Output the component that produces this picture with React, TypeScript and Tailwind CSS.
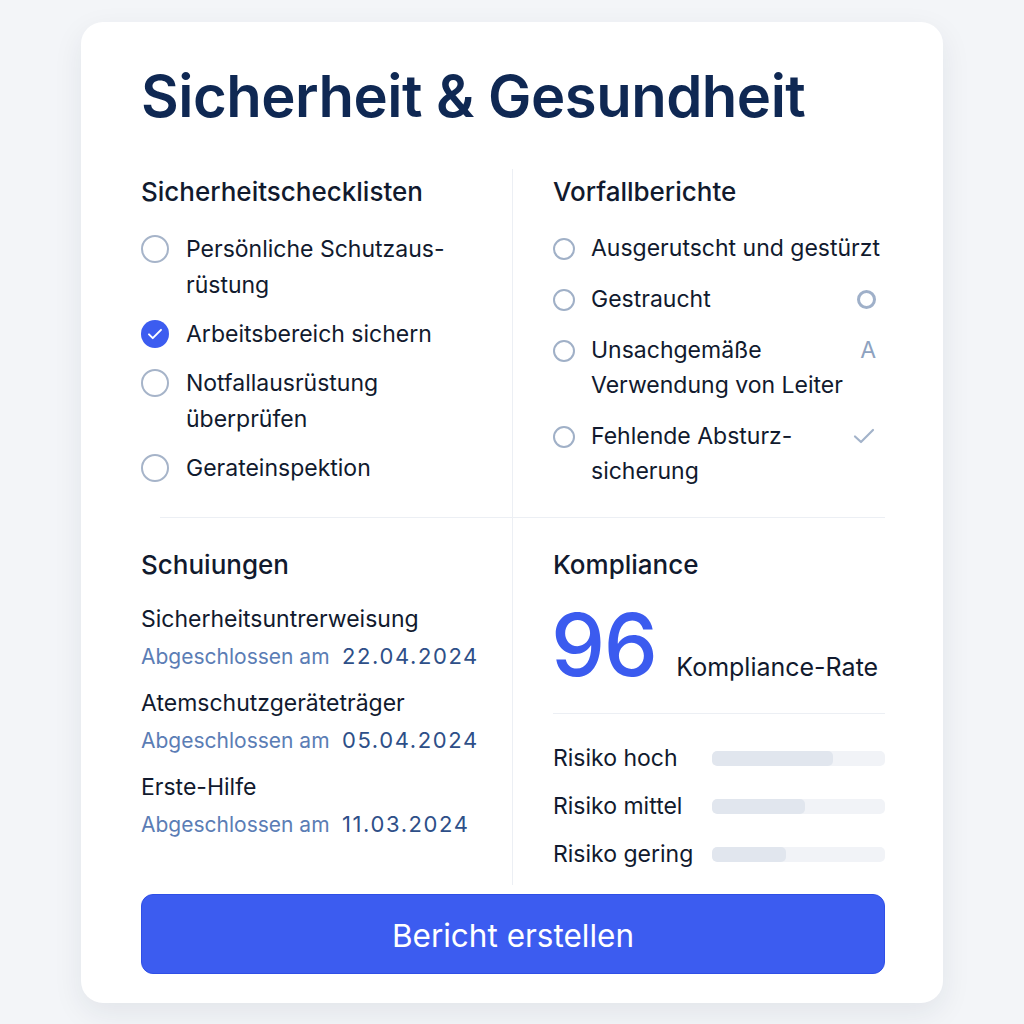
import React from 'react'

const CHECKS = [
  { label: 'Persönliche Schutzaus-\nrüstung', done: false },
  { label: 'Arbeitsbereich sichern', done: true },
  { label: 'Notfallausrüstung\nüberprüfen', done: false },
  { label: 'Gerateinspektion', done: false },
]

const INCIDENTS = [
  { label: 'Ausgerutscht und gestürzt', mark: null },
  { label: 'Gestraucht', mark: 'circle' },
  { label: 'Unsachgemäße\nVerwendung von Leiter', mark: 'letter' },
  { label: 'Fehlende Absturz-\nsicherung', mark: 'check' },
]

const TRAININGS = [
  { name: 'Sicherheitsuntrerweisung', date: '22.04.2024' },
  { name: 'Atemschutzgeräteträger', date: '05.04.2024' },
  { name: 'Erste-Hilfe', date: '11.03.2024' },
]

const RISKS = [
  { label: 'Risiko hoch', value: 70 },
  { label: 'Risiko mittel', value: 53.5 },
  { label: 'Risiko gering', value: 43 },
]

function Mark({ kind }: { kind: string | null }) {
  if (kind === 'circle')
    return <span className="mt-[8px] block h-[19px] w-[19px] shrink-0 rounded-full border-[3px] border-[#9fb0c9]" />
  if (kind === 'letter')
    return <span className="text-[23px] leading-[35px] text-[#8ea2c0]">A</span>
  if (kind === 'check')
    return (
      <svg width="24" height="24" viewBox="0 0 24 24" className="mt-[5px] shrink-0" fill="none" stroke="#a3b3ca" strokeWidth="2.2" strokeLinecap="round" strokeLinejoin="round">
        <path d="M3 12.5l6 5.5L21 6" />
      </svg>
    )
  return null
}

export default function App() {
  return (
    <div className="min-h-screen bg-[#f3f5f8] pt-[22px] font-['Inter',sans-serif] text-[#111a2e]">
      <div className="ml-[81px] w-[862px] rounded-[22px] bg-white pb-[29px] pl-[60px] pr-[58px] pt-[41px] shadow-[0_10px_30px_rgba(30,41,70,0.08)]">
        <h1 className="text-[58px] font-semibold leading-[67px] tracking-[-0.5px] text-[#0f2853]">Sicherheit &amp; Gesundheit</h1>

        <div className="mt-[39px] grid grid-cols-[371px_minmax(0,1fr)]">
          <div className="pb-[28px] pt-[7px]">
            <h2 className="text-[26px] font-medium leading-[32px]">Sicherheitschecklisten</h2>
            <div className="mt-[23px] flex flex-col gap-[13px]">
              {CHECKS.map(c => (
                <div key={c.label} className="flex items-start gap-[17px]">
                  {c.done ? (
                    <span className="mt-[4px] flex h-[28px] w-[28px] shrink-0 items-center justify-center rounded-full bg-[#3c5cf0]">
                      <svg width="18" height="18" viewBox="0 0 24 24" fill="none" stroke="white" strokeWidth="2.6" strokeLinecap="round" strokeLinejoin="round">
                        <path d="M4 12.5l5 5L20 6.5" />
                      </svg>
                    </span>
                  ) : (
                    <span className="mt-[4px] block h-[28px] w-[28px] shrink-0 rounded-full border-2 border-[#a6b4c9]" />
                  )}
                  <span className="whitespace-pre text-[23px] leading-[36px]">{c.label}</span>
                </div>
              ))}
            </div>
          </div>

          <div className="border-l border-[#eceff4] pb-[28px] pl-[40px] pt-[7px]">
            <h2 className="text-[26px] font-medium leading-[32px]">Vorfallberichte</h2>
            <div className="mt-[23px] flex flex-col gap-[16px]">
              {INCIDENTS.map(i => (
                <div key={i.label} className="flex items-start gap-[16px] pr-[9px]">
                  <span className="mt-[6.5px] block h-[22px] w-[22px] shrink-0 rounded-full border-2 border-[#a0b0c7]" />
                  <span className="min-w-0 flex-1 whitespace-pre text-[23px] leading-[35px]">{i.label}</span>
                  <Mark kind={i.mark} />
                </div>
              ))}
            </div>
          </div>
        </div>

        <div className="flex">
          <div className="ml-[19px] h-px flex-1 bg-[#eceff4]" />
        </div>

        <div className="grid grid-cols-[371px_minmax(0,1fr)]">
          <div className="pt-[31px]">
            <h2 className="text-[26px] font-medium leading-[32px]">Schuiungen</h2>
            <div className="mt-[20px] flex flex-col gap-[10px]">
              {TRAININGS.map(t => (
                <div key={t.name} className="leading-[37px]">
                  <div className="text-[23px]">{t.name}</div>
                  <div className="flex items-baseline">
                    <span className="w-[201px] text-[21px] text-[#5b7db5]">Abgeschlossen am</span>
                    <span className="text-[22px] tracking-[1.6px] text-[#2e4f88]">{t.date}</span>
                  </div>
                </div>
              ))}
            </div>
          </div>

          <div className="border-l border-[#eceff4] pb-[15px] pl-[40px] pt-[31px]">
            <h2 className="text-[26px] font-medium leading-[32px]">Kompliance</h2>
            <div className="mt-[21px] flex items-baseline gap-[20px] whitespace-nowrap">
              <span className="-ml-[2px] text-[86px] font-medium leading-none tracking-[-1.5px] text-[#3b5bef]">96</span>
              <span className="text-[25px]">Kompliance-Rate</span>
            </div>
            <div className="mt-[25px] h-px bg-[#eceff4]" />
            <div className="mt-[28px] flex flex-col gap-[16px]">
              {RISKS.map(r => (
                <div key={r.label} className="flex items-center">
                  <span className="w-[159px] text-[23px] leading-[32px]">{r.label}</span>
                  <div className="h-[15px] flex-1 overflow-hidden rounded-[5px] bg-[#f1f3f7]">
                    <div className="h-full rounded-[5px] bg-[#e1e6ee]" style={{ width: `${r.value}%` }} />
                  </div>
                </div>
              ))}
            </div>
          </div>
        </div>

        <button className="mt-[9px] flex h-[80px] w-full items-center justify-center rounded-[12px] border border-[#2f4fe6] bg-[#3c5cf0] pt-[3px] text-[31.5px] text-white">
          Bericht erstellen
        </button>
      </div>
    </div>
  )
}
